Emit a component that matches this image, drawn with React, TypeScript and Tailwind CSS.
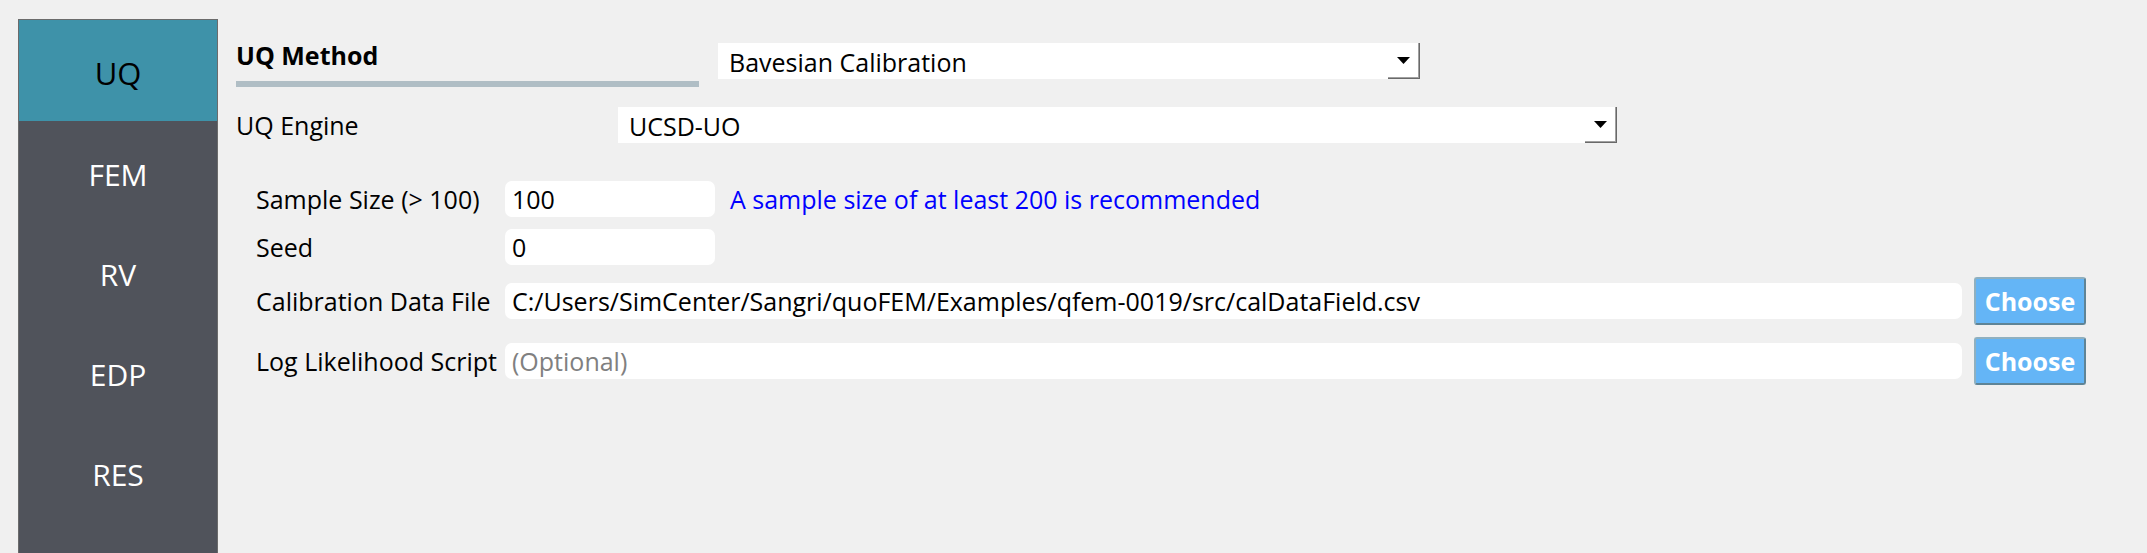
const font = { fontFamily: '"Open Sans", "Noto Sans", sans-serif' };

const tabs = ["UQ", "FEM", "RV", "EDP", "RES"];

const Combo = ({ value, width }: { value: string; width: string }) => (
  <div className={`flex h-[36px] bg-white ${width}`}>
    <div className="flex flex-1 items-center pl-[11px] pt-[4px] text-[25px] text-black">{value}</div>
    <div className="flex w-[32px] items-center justify-center border-r border-b border-[#696969] shadow-[inset_-1px_-1px_0_#a0a0a0]">
      <svg width="13" height="7" viewBox="0 0 13 7">
        <path d="M0 0 L13 0 L6.5 7 Z" fill="#000" />
      </svg>
    </div>
  </div>
);

const ChooseButton = () => (
  <button className="flex h-[48px] w-[112px] items-center justify-center rounded-[3px] border-2 border-t-[#8fb0c0] border-l-[#8fb0c0] border-r-[#5f8496] border-b-[#5f8496] bg-[#64b5f6] pt-[2px] text-[25px] font-bold text-white">
    Choose
  </button>
);

const App = () => {
  return (
    <div className="flex h-[553px] w-full overflow-hidden bg-[#f0f0f0] pl-[18px] pt-[19px]" style={font}>
      {/* side bar */}
      <div className="flex h-full w-[200px] shrink-0 flex-col border-l border-t border-r border-[#6b6b6b] bg-[#50535b]">
        {tabs.map((t, i) => (
          <div
            key={t}
            className={
              i === 0
                ? "flex h-[101px] items-center justify-center bg-[#3e92a9] pt-[6px] text-[31px] text-black"
                : "flex h-[100px] items-center justify-center pt-[6px] text-[30px] text-white"
            }
          >
            {t}
          </div>
        ))}
      </div>

      {/* main */}
      <div className="ml-[18px] mt-[24px] flex flex-1 flex-col">
        <div className="flex items-start">
          <div className="flex w-[463px] flex-col">
            <div className="h-[38px]">
              <span className="block text-[25px] leading-[25px] font-bold text-black">UQ Method</span>
            </div>
            <div className="h-[6px] bg-[#b0bec5]" />
          </div>
          <div className="ml-[19px]">
            <Combo value="Bavesian Calibration" width="w-[702px]" />
          </div>
        </div>

        <div className="mt-[18px] flex items-center">
          <div className="w-[382px] pt-[2px] text-[25px] text-black">UQ Engine</div>
          <Combo value="UCSD-UO" width="w-[999px]" />
        </div>

        <div className="mt-[36px] flex flex-col gap-3 pl-[20px] text-[25px] text-black">
          <div className="flex h-[36px] items-center">
            <div className="w-[249px] pt-[3px]">Sample Size (&gt; 100)</div>
            <div className="flex h-[36px] w-[210px] items-center rounded-[7px] bg-white pl-[7px] pt-[3px]">100</div>
            <div className="ml-[15px] pt-[3px] text-[#0000ff]">A sample size of at least 200 is recommended</div>
          </div>
          <div className="flex h-[36px] items-center">
            <div className="w-[249px] pt-[3px]">Seed</div>
            <div className="flex h-[36px] w-[210px] items-center rounded-[7px] bg-white pl-[7px] pt-[3px]">0</div>
          </div>
          <div className="flex h-[48px] items-center">
            <div className="w-[249px] pt-[3px]">Calibration Data File</div>
            <div className="flex h-[36px] w-[1457px] items-center rounded-[7px] bg-white pl-[7px] pt-[3px]">
              C:/Users/SimCenter/Sangri/quoFEM/Examples/qfem-0019/src/calDataField.csv
            </div>
            <div className="ml-[12px]">
              <ChooseButton />
            </div>
          </div>
          <div className="flex h-[48px] items-center">
            <div className="w-[249px] pt-[3px]">Log Likelihood Script</div>
            <div className="flex h-[36px] w-[1457px] items-center rounded-[7px] bg-white pl-[7px] pt-[3px] text-[#808080]">
              (Optional)
            </div>
            <div className="ml-[12px]">
              <ChooseButton />
            </div>
          </div>
        </div>
      </div>
    </div>
  );
};

export default App;
